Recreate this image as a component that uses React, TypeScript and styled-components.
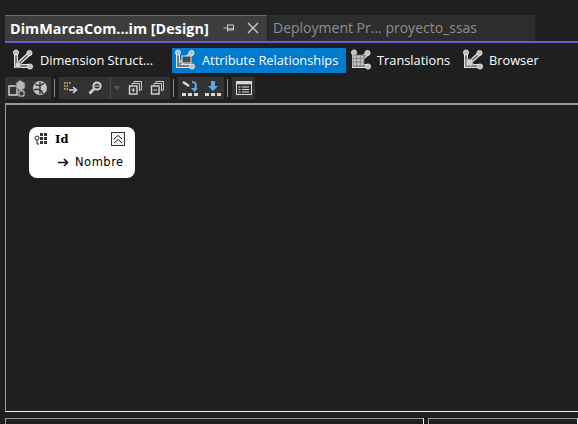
import React from 'react';
import styled, { createGlobalStyle } from 'styled-components';

const GlobalStyle = createGlobalStyle`
  html, body {
    margin: 0;
    padding: 0;
    width: 578px;
    height: 424px;
    overflow: hidden;
    background: #1f1f1f;
    font-family: "Open Sans", "Noto Sans", sans-serif;
  }
`;

const Page = styled.div`
  width: 578px;
  height: 424px;
  padding: 15px 0 0 5px;
  box-sizing: border-box;
  display: flex;
  flex-direction: column;
  overflow: hidden;
`;

const TabStrip = styled.div`
  display: flex;
  height: 26px;
  gap: 1px;
  border-bottom: 2px solid #6c5bd4;
`;

const ActiveTab = styled.div`
  width: 262px;
  box-sizing: border-box;
  background: #3d3d3d;
  border-top: 1px solid #6c5bd4;
  display: flex;
  align-items: center;
  padding: 0 0 1px 5px;
  color: #fff;
  font-size: 14.4px;
  font-weight: 700;
  white-space: nowrap;
`;

const TabTitle = styled.span`
  flex: 1;
`;

const TabIcon = styled.svg<{ $gap: number }>`
  display: block;
  flex: none;
  margin-right: ${(p) => p.$gap}px;
`;

const InactiveTab = styled.div`
  width: 267px;
  box-sizing: border-box;
  background: #2d2d2d;
  display: flex;
  align-items: center;
  padding: 0 0 1px 5px;
  color: #8f8f8f;
  font-size: 14px;
  white-space: nowrap;
`;

const ViewBar = styled.div`
  display: flex;
  height: 25px;
  margin-top: 5px;
`;

const ViewButton = styled.div<{ $active?: boolean; $width: number; $inset: number; $gap: number }>`
  width: ${(p) => p.$width}px;
  box-sizing: border-box;
  display: flex;
  align-items: center;
  gap: ${(p) => p.$gap}px;
  padding: 0 0 2px ${(p) => p.$inset}px;
  color: #fff;
  font-size: 12.8px;
  white-space: nowrap;
  background: ${(p) => (p.$active ? '#007acc' : 'transparent')};
`;

const IconBar = styled.div`
  display: flex;
  align-items: center;
  height: 22px;
  margin-top: 4px;
`;

const IconGroup = styled.div<{ $width: number }>`
  width: ${(p) => p.$width}px;
  height: 22px;
  background: #333333;
  display: flex;
  align-items: center;
  justify-content: space-around;
`;

const PackedGroup = styled(IconGroup)`
  justify-content: flex-start;
  gap: 4px;
  padding-left: 3px;
  box-sizing: border-box;
`;

const DropSegment = styled.div`
  width: 13px;
  height: 22px;
  margin-left: 4px;
  box-sizing: border-box;
  border-left: 1px solid #484848;
  display: flex;
  align-items: center;
  justify-content: center;
`;

const Divider = styled.div`
  width: 1px;
  height: 18px;
  margin: 0 4px 0 3px;
  background: #8a8a8a;
`;

const Canvas = styled.div`
  height: 309px;
  margin-top: 4px;
  box-sizing: border-box;
  border-top: 2px solid #9a9a9a;
  border-left: 1px solid #9a9a9a;
  border-bottom: 1px solid #f2f2f2;
  padding: 22px 0 0 23px;
`;

const AttributeCard = styled.div`
  width: 106px;
  height: 51px;
  box-sizing: border-box;
  background: #fff;
  border-radius: 8px;
  padding: 4px 10px 0 5px;
  color: #000;
`;

const CardHead = styled.div`
  display: flex;
  align-items: center;
  gap: 7px;
  height: 16px;
`;

const KeyName = styled.span`
  flex: 1;
  font-family: "DejaVu Serif", serif;
  font-size: 11.5px;
  font-weight: 700;
`;

const CardRow = styled.div`
  display: flex;
  align-items: center;
  gap: 6px;
  margin: 8px 0 0 24px;
  font-family: "DejaVu Sans", sans-serif;
  font-size: 11.5px;
  letter-spacing: 0.5px;
`;

const BottomPanels = styled.div`
  display: flex;
  gap: 4px;
  margin-top: 6px;
  flex: 1;
`;

const Panel = styled.div<{ $width: number }>`
  width: ${(p) => p.$width}px;
  box-sizing: border-box;
  border-top: 1px solid #9a9a9a;
  border-left: 1px solid #9a9a9a;
  border-right: 1px solid #f2f2f2;
`;

const IconSvg = styled.svg`
  display: block;
  flex: none;
`;

/* the network of nodes that VS draws on every designer tab */
const NodesIcon = ({ variant }: { variant: 'plain' | 'box' | 'grid' | 'dot' }) => (
  <IconSvg width="22" height="22" viewBox="0 0 22 22" fill="none">
    <g stroke="#e4e4e4" strokeWidth="4" strokeLinecap="round">
      <path d="M4 4v13h13" />
      <path d="M6 15 17 5" />
    </g>
    <g stroke="#5c5c5c" strokeWidth="1.6" strokeLinecap="round">
      <path d="M4 4v13h13" />
      <path d="M6 15 17 5" />
    </g>
    <circle cx="4" cy="3.5" r="2.6" fill="#bdbdbd" stroke="#eee" strokeWidth="0.8" />
    <circle cx="17.5" cy="4" r="2.6" fill="#bdbdbd" stroke="#eee" strokeWidth="0.8" />
    <circle cx="18" cy="17.5" r="2.6" fill="#bdbdbd" stroke="#eee" strokeWidth="0.8" />
    {variant === 'box' && <rect x="8" y="7" width="9" height="7" fill="#4a4a4a" stroke="#ddd" />}
    {variant === 'grid' && (
      <g stroke="#777" strokeWidth="0.8">
        <rect x="3" y="6" width="11" height="11" fill="#c4c4c4" />
        <path d="M3 9.5h11M3 13h11M6.6 6v11M10.3 6v11" />
      </g>
    )}
    {variant === 'dot' && <rect x="4" y="10" width="7" height="7" fill="#d0d0d0" stroke="#777" strokeWidth="0.7" />}
    {variant === 'plain' && <circle cx="6" cy="16" r="3" fill="#d8d8d8" stroke="#777" strokeWidth="0.7" />}
  </IconSvg>
);

const Glyph = ({ children }: { children: React.ReactNode }) => (
  <IconSvg width="18" height="18" viewBox="0 0 18 18" fill="none">
    {children}
  </IconSvg>
);

const App = () => {
  return (
    <Page>
      <GlobalStyle />
      <TabStrip>
        <ActiveTab>
          <TabTitle>DimMarcaCom...im [Design]</TabTitle>
          <TabIcon $gap={12} width="12" height="12" viewBox="0 0 12 12">
            <path d="M0.5 6h4M4.5 2.5v7M4.5 3h6v5h-6M4.5 6.8h6" stroke="#d0d0d0" strokeWidth="1" fill="none" />
          </TabIcon>
          <TabIcon $gap={8} width="12" height="12" viewBox="0 0 12 12">
            <path d="M1 1l10 10M11 1 1 11" stroke="#c8c8c8" strokeWidth="1.4" />
          </TabIcon>
        </ActiveTab>
        <InactiveTab>Deployment Pr... proyecto_ssas</InactiveTab>
      </TabStrip>

      <ViewBar>
        <ViewButton $width={167} $inset={7} $gap={6}>
          <NodesIcon variant="plain" />
          Dimension Struct...
        </ViewButton>
        <ViewButton $width={174} $inset={2} $gap={6} $active>
          <NodesIcon variant="box" />
          Attribute Relationships
        </ViewButton>
        <ViewButton $width={112} $inset={4} $gap={5}>
          <NodesIcon variant="grid" />
          Translations
        </ViewButton>
        <ViewButton $width={100} $inset={4} $gap={5}>
          <NodesIcon variant="dot" />
          Browser
        </ViewButton>
      </ViewBar>

      <IconBar>
        <IconGroup $width={46}>
          <Glyph>
            <path d="M1 7h8v9H1z" fill="#333" stroke="#d4d4d4" strokeWidth="1.4" />
            <path d="M8 4l4-3 5 3v5l-4 3-5-3z" fill="#b8b8b8" stroke="#555" strokeWidth="0.8" />
            <path d="M11 12h5v5h-5z" fill="#333" stroke="#ddd" />
          </Glyph>
          <Glyph>
            <circle cx="9" cy="9" r="7" fill="#c4c4c4" />
            <path d="M4 5c3 3 7 1 9-1M3 11c4-2 8 0 9 4M9 3v12" stroke="#3a3a3a" strokeWidth="1.5" />
          </Glyph>
        </IconGroup>
        <Divider />
        <PackedGroup $width={111}>
          <Glyph>
            <path d="M2 4h7M2 7h4M2 10h4" stroke="#e8c060" strokeWidth="1.5" strokeDasharray="1.5 1" />
            <path d="M7 11h6M11 8l3.5 3-3.5 3" stroke="#d8d8d8" strokeWidth="1.6" />
          </Glyph>
          <Glyph>
            <circle cx="13" cy="7" r="3.6" stroke="#d4d4d4" strokeWidth="2" />
            <path d="M10 10l-4.5 4.5" stroke="#d4d4d4" strokeWidth="2.6" />
            <path d="M11 7h4" stroke="#d4d4d4" strokeWidth="1" />
          </Glyph>
          <DropSegment>
            <IconSvg width="8" height="6" viewBox="0 0 8 6">
              <path d="M1 1l3 4 3-4z" fill="#5a5a5a" />
            </IconSvg>
          </DropSegment>
          <Glyph>
            <path d="M7 5V2.5h7.5V11H12M5 6.5V4.5h7.5V12" stroke="#c8c8c8" />
            <rect x="2.5" y="7" width="7.5" height="8" fill="#333" stroke="#d8d8d8" strokeWidth="1.4" />
            <path d="M4.5 11h3.5M6.2 9v4" stroke="#d8d8d8" />
          </Glyph>
          <Glyph>
            <path d="M7 5V2.5h7.5V11H12M5 6.5V4.5h7.5V12" stroke="#c8c8c8" />
            <rect x="2.5" y="7" width="7.5" height="8" fill="#333" stroke="#d8d8d8" strokeWidth="1.4" />
            <path d="M4.5 11h3.5" stroke="#d8d8d8" />
          </Glyph>
        </PackedGroup>
        <Divider />
        <IconGroup $width={46}>
          <Glyph>
            <path d="M2 3l6 4" stroke="#d8d8d8" strokeWidth="2.5" />
            <path d="M11 3c4 0 5 3 3 7" stroke="#5aa9e6" strokeWidth="2" />
            <path d="M10 9h7l-3.5 4z" fill="#5aa9e6" />
            <path d="M1 14h4v3H1zM7 14h4v3H7zM13 14h4v3h-4z" fill="#d8d8d8" />
          </Glyph>
          <Glyph>
            <path d="M7 2h4v5h3l-5 5-5-5h3z" fill="#5aa9e6" />
            <path d="M1 14h4v3H1zM7 14h4v3H7zM13 14h4v3h-4z" fill="#d8d8d8" />
          </Glyph>
        </IconGroup>
        <Divider />
        <IconGroup $width={23}>
          <Glyph>
            <rect x="1.5" y="2.5" width="15" height="13" stroke="#d8d8d8" />
            <path d="M1.5 4h15" stroke="#d8d8d8" strokeWidth="2.5" />
            <path d="M3.5 8h2M7 8h7M3.5 10.5h2M7 10.5h7M3.5 13h2M7 13h7" stroke="#d8d8d8" />
          </Glyph>
        </IconGroup>
      </IconBar>

      <Canvas>
        <AttributeCard>
          <CardHead>
            <IconSvg width="14" height="14" viewBox="0 0 14 14">
              <path d="M6 1h3v3H6zM10 1h3v3h-3zM6 5h3v3H6zM10 5h3v3h-3zM6 9h3v3H6zM10 9h3v3h-3z" fill="#333" />
              <circle cx="3" cy="6" r="2" fill="none" stroke="#222" />
              <path d="M3 8v4h2" fill="none" stroke="#222" />
            </IconSvg>
            <KeyName>Id</KeyName>
            <IconSvg width="14" height="14" viewBox="0 0 14 14">
              <rect x="0.5" y="0.5" width="13" height="13" fill="#f4f4f4" stroke="#333" />
              <path d="M3 7l4-3.5L11 7M3 11l4-3.5L11 11" fill="none" stroke="#222" />
            </IconSvg>
          </CardHead>
          <CardRow>
            <IconSvg width="11" height="9" viewBox="0 0 11 9">
              <path d="M0 4.5h9M6 1l3.5 3.5L6 8" fill="none" stroke="#111" strokeWidth="1.6" />
            </IconSvg>
            Nombre
          </CardRow>
        </AttributeCard>
      </Canvas>

      <BottomPanels>
        <Panel $width={419} />
        <Panel $width={150} />
      </BottomPanels>
    </Page>
  );
};

export default App;
